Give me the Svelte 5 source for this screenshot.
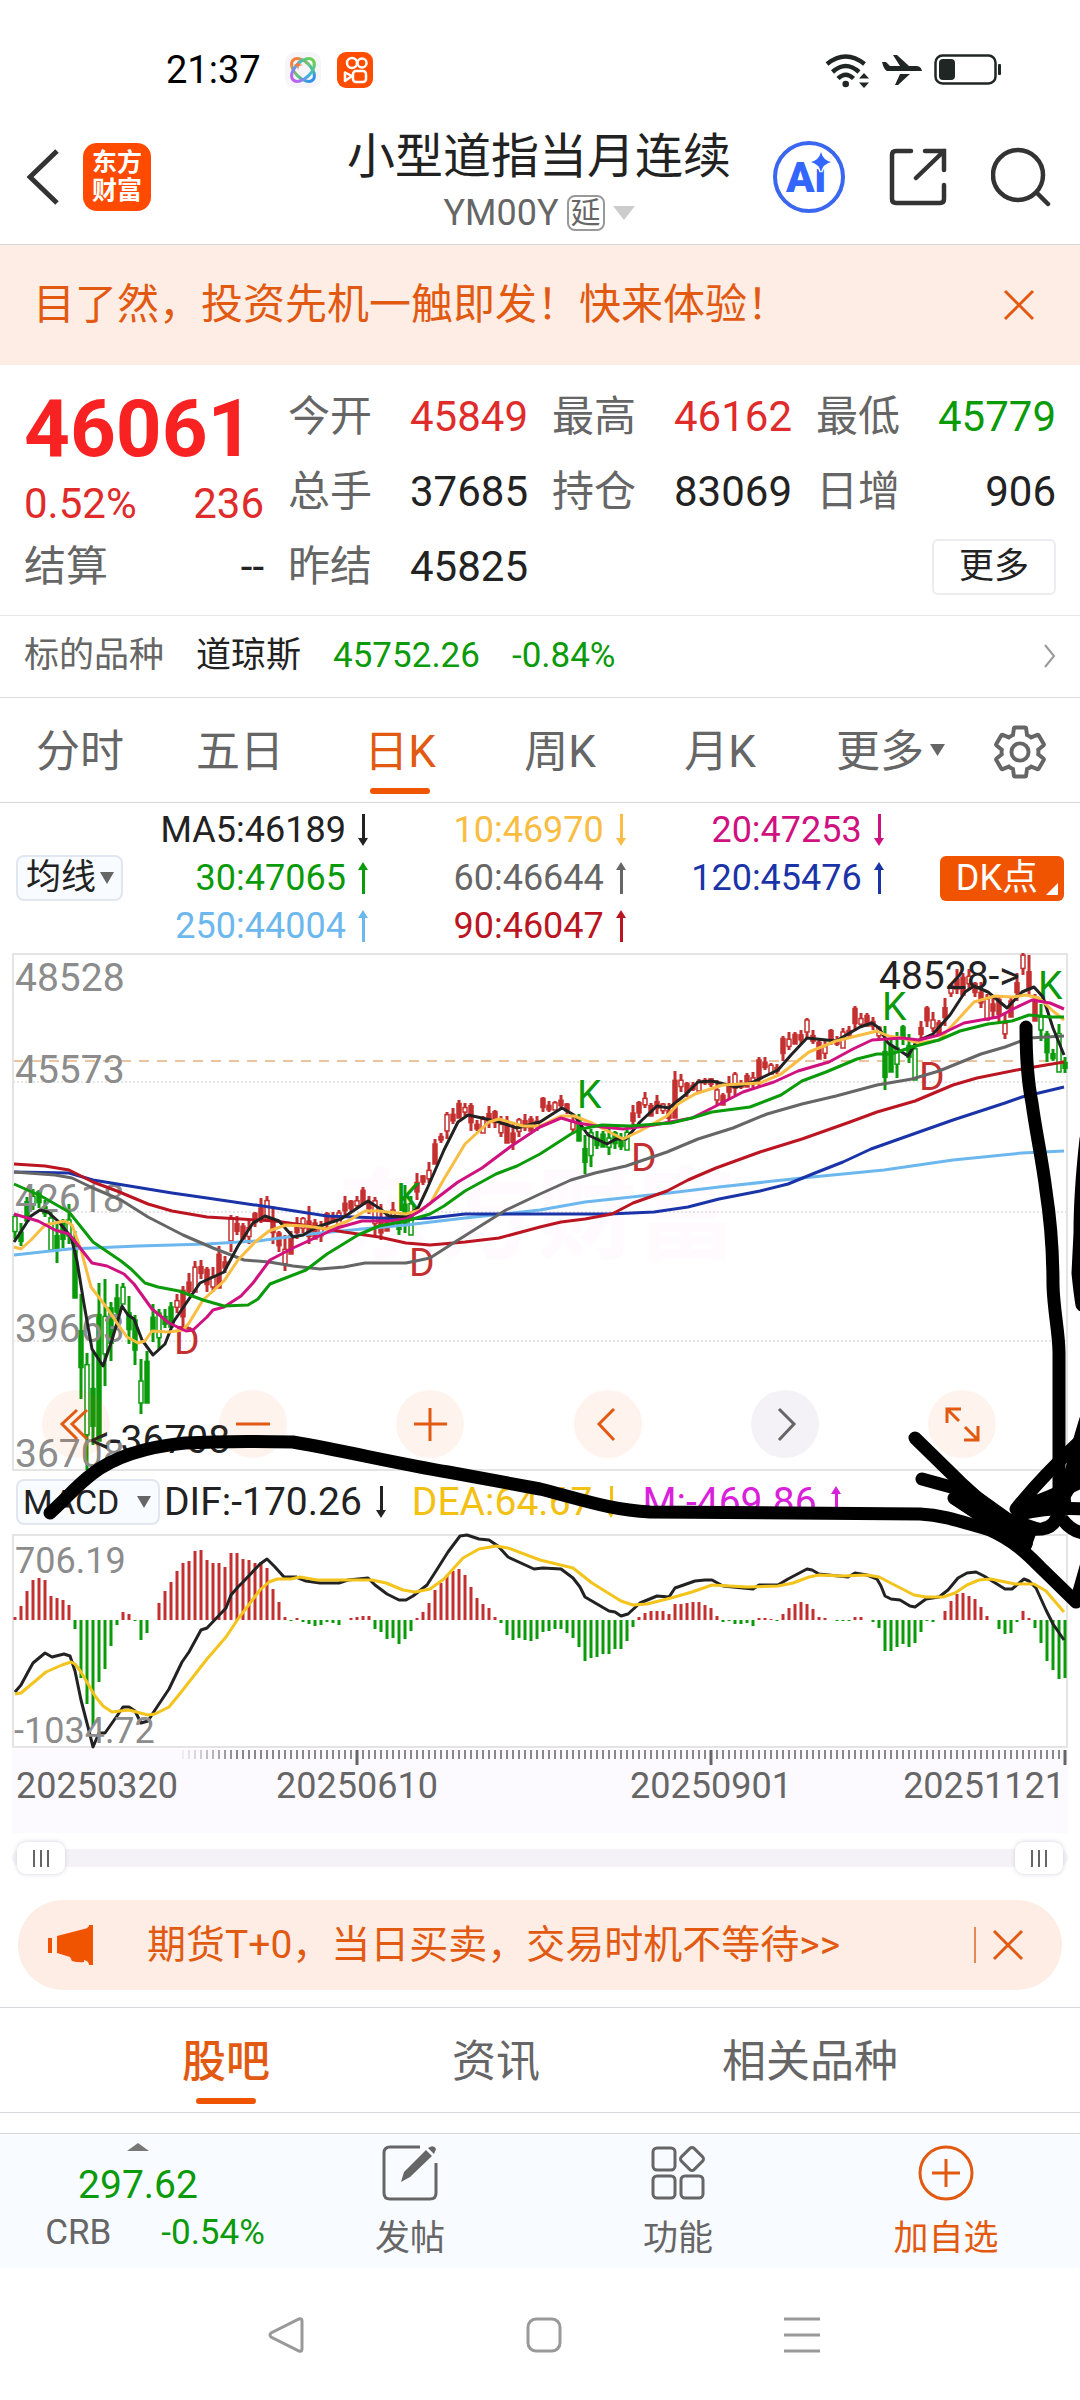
<script>
	const quotes = [
		{ label: '今开', value: '45849', tone: 'up' },
		{ label: '最高', value: '46162', tone: 'up' },
		{ label: '最低', value: '45779', tone: 'down' },
		{ label: '总手', value: '37685', tone: '' },
		{ label: '持仓', value: '83069', tone: '' },
		{ label: '日增', value: '906', tone: '' },
		{ label: '结算', value: '--', tone: '' },
		{ label: '昨结', value: '45825', tone: '' }
	];

	const periods = ['分时', '五日', '日K', '周K', '月K', '更多'];
	let period = $state('日K');

	const feeds = ['股吧', '资讯', '相关品种'];
	let feed = $state('股吧');

	let from = $state(0);
	let to = $state(100);

	const averages = [
		{ text: 'MA5:46189', color: '#222222', up: false },
		{ text: '10:46970', color: '#f8bd42', up: false },
		{ text: '20:47253', color: '#cf1280', up: false },
		{ text: '30:47065', color: '#0a9a0a', up: true },
		{ text: '60:46644', color: '#666666', up: true },
		{ text: '120:45476', color: '#1a34a8', up: true },
		{ text: '250:44004', color: '#6cb8ee', up: true },
		{ text: '90:46047', color: '#bb1522', up: true }
	];

	const macdValues = [
		{ text: 'DIF:-170.26', color: '#222222', up: false },
		{ text: 'DEA:64.67', color: '#f3c014', up: false },
		{ text: 'M:-469.86', color: '#d921dc', up: true }
	];

	// distance between two trading days and the x of the first one
	const step = 6;
	const firstX = 15;

	// high and low of every day
	const days = [
		[261,286],[270,293],[244,268],[236,257],[237,255],[247,264],[257,297],[268,310],[266,295],[251,291],
		[278,345],[341,446],[400,517],[398,492],[330,488],[326,433],[349,408],[331,366],[330,351],[343,391],
		[362,412],[406,461],[398,450],[351,389],[356,397],[356,375],[349,374],[341,360],[333,377],[320,343],
		[308,339],[307,326],[314,339],[314,339],[293,335],[303,320],[262,299],[263,282],[270,286],[266,291],
		[259,274],[245,270],[243,266],[253,291],[278,299],[282,318],[278,301],[264,286],[264,280],[253,291],
		[266,286],[268,289],[259,276],[259,270],[257,272],[243,264],[247,259],[243,255],[234,251],[243,261],
		[244,282],[251,287],[261,278],[249,272],[263,282],[232,280],[243,282],[220,247],[222,232],[209,230],
		[186,211],[180,190],[159,186],[155,171],[147,165],[150,163],[150,178],[167,178],[163,180],[153,175],
		[157,175],[163,184],[163,190],[171,197],[165,184],[161,178],[163,178],[163,178],[144,159],[148,159],
		[148,157],[142,157],[150,161],[161,180],[161,188],[182,221],[176,214],[178,196],[178,194],[176,202],
		[178,196],[180,197],[175,197],[152,175],[148,165],[139,155],[150,163],[142,161],[150,161],[150,169],
		[118,165],[121,139],[129,144],[129,138],[126,138],[125,132],[125,134],[127,152],[140,152],[123,146],
		[119,142],[127,136],[120,134],[119,136],[104,134],[104,117],[110,121],[111,121],[83,108],[79,97],
		[79,91],[77,91],[65,85],[77,91],[85,106],[87,106],[76,92],[83,93],[75,95],[73,86],
		[53,78],[60,74],[60,73],[64,77],[73,87],[73,137],[86,119],[79,125],[72,92],[81,110],
		[88,127],[68,87],[53,74],[59,79],[67,81],[45,73],[31,44],[16,41],[20,42],[16,37],
		[29,44],[29,55],[41,67],[44,64],[44,69],[60,86],[44,64],[20,48],[0,22],[2,44],
		[41,68],[51,88],[78,109],[96,108],[71,119],[104,120]
	];
	// day ranges drawn green, between a K signal and the next D signal
	const falling = [[0, 26], [64, 66], [94, 102], [145, 150], [171, 175]];
	const insets = [[0.1, 0.3], [0.35, 0.3], [0.2, 0], [0.4, 0.2]];

	const candles = days.map(([high, low], i) => {
		const [a, b] = insets[(i * 7) % 4];
		const size = low - high;
		return {
			x: firstX + step * i,
			high,
			low,
			top: high + size * a,
			body: size * (1 - a - b),
			hollow: i % 3 === 0,
			color: falling.some(([s, e]) => i >= s && i <= e) ? '#0a9a0a' : '#c43030'
		};
	});

	const priceLines = [
		{ color: '#6cb8ee', points: '14,302 69,296 138,293 207,291 258,288 310,281 362,276 406,272 465,265 540,257 585,249 669,240 719,234 802,225 884,217 953,207 1022,200 1064,198' },
		{ color: '#1a34a8', points: '14,219 69,220 93,227 172,240 207,245 241,250 269,254 327,263 406,266 430,265 465,261 540,261 609,261 654,259 688,254 719,246 760,238 788,231 815,220 843,209 871,196 919,179 953,167 1005,150 1022,144 1064,134' },
		{ color: '#bb1522', points: '14,211 45,213 69,217 93,229 117,238 148,251 172,258 207,264 241,266 275,268 310,273 344,279 379,284 406,290 430,292 465,289 499,285 540,274 561,269 585,266 612,261 633,250 667,238 688,227 716,215 760,199 802,186 850,169 877,159 915,148 953,132 977,125 1022,116 1064,109' },
		{ color: '#666666', points: '14,219 55,222 72,225 93,235 121,247 148,264 183,282 213,295 244,307 269,309 293,313 320,316 344,314 365,310 406,310 430,305 455,289 482,272 506,257 540,241 571,227 595,220 626,213 667,199 698,186 733,175 767,161 802,151 836,143 877,132 912,126 939,118 981,101 1005,94 1029,85 1064,83' },
		{ color: '#222222', points: '14,289 22,277 31,263 40,257 48,259 59,269 71,284 77,308 84,351 92,396 103,413 112,387 122,353 128,362 134,366 142,387 153,402 165,391 174,368 189,346 200,330 224,319 238,293 253,270 265,263 279,268 293,284 303,282 317,274 341,266 368,248 379,255 389,263 406,264 418,255 427,236 444,197 458,169 468,162 482,165 499,169 517,175 540,169 554,160 562,155 574,162 588,182 607,191 616,186 626,186 640,169 657,153 669,155 685,142 698,129 712,128 736,134 753,129 778,117 791,102 807,85 836,88 860,74 872,70 879,75 888,90 908,103 917,88 933,81 950,62 965,39 974,33 988,39 1007,55 1022,39 1034,34 1043,44 1053,75 1064,102' },
		{ color: '#f8bd42', points: '14,294 21,296 31,287 45,272 65,268 72,272 81,297 91,334 107,355 117,370 127,384 138,390 145,388 152,378 169,379 183,377 189,370 203,347 224,328 238,307 255,289 269,278 286,272 306,273 327,276 348,268 365,258 379,258 406,261 420,257 430,251 444,226 465,191 489,169 499,166 523,173 540,173 561,163 574,163 592,170 623,186 640,178 667,163 678,151 695,141 723,132 760,130 781,121 809,99 836,88 877,78 888,83 902,85 919,90 939,87 950,75 974,49 995,43 1012,44 1026,42 1039,45 1053,58 1064,67' },
		{ color: '#cf1280', points: '14,261 38,268 55,277 69,281 81,296 92,310 107,313 124,321 134,331 152,356 169,370 186,378 193,377 207,364 213,357 224,354 241,343 253,330 270,307 293,295 317,284 337,275 362,268 389,268 406,266 420,258 437,245 458,229 482,215 510,194 540,174 561,165 578,170 602,174 623,176 654,172 692,165 712,155 743,139 774,129 798,118 829,109 853,96 872,87 902,85 919,87 939,82 964,70 998,64 1015,55 1032,47 1050,50 1064,56' },
		{ color: '#0a9a0a', points: '14,231 41,243 69,259 93,289 121,308 131,316 145,330 158,334 179,338 203,347 224,353 248,352 258,346 270,331 306,317 327,301 358,282 379,273 406,268 430,261 444,253 465,238 496,221 517,213 540,201 554,192 571,181 581,176 602,172 630,173 671,170 692,165 712,159 750,154 781,142 802,128 826,119 857,106 877,101 891,101 912,94 939,87 960,78 988,71 1012,68 1029,62 1050,64 1064,64' }
	];

	const priceScale = [
		{ text: '48528', y: 38 },
		{ text: '45573', y: 130 },
		{ text: '42618', y: 259 },
		{ text: '39663', y: 389 },
		{ text: '36708', y: 514 }
	];

	const signals = [
		{ kind: 'D', x: 174, y: 401 },
		{ kind: 'K', x: 396, y: 258 },
		{ kind: 'D', x: 409, y: 323 },
		{ kind: 'K', x: 577, y: 155 },
		{ kind: 'D', x: 631, y: 218 },
		{ kind: 'K', x: 882, y: 67 },
		{ kind: 'D', x: 919, y: 137 },
		{ kind: 'K', x: 1038, y: 46 }
	];

	const zero = 86;
	const histogram = [
		3, 14, 29, 40, 42, 40, 24, 22, 20, 15, -9, -58, -84, -106, -62, -49, -26, -5, 8, 6,
		-1, -20, -13, 0, 17, 29, 38, 49, 57, 59, 69, 70, 60, 57, 57, 53, 67, 67, 61, 60,
		57, 58, 52, 31, 18, 3, -1, 2, -2, -4, -6, -5, -2, -3, -5, 0, 2, 3, 4, 4,
		-9, -12, -19, -18, -24, -19, -11, 2, 8, 17, 30, 37, 45, 49, 51, 45, 33, 22, 16, 12,
		3, -3, -15, -20, -18, -20, -21, -19, -12, -11, -9, -9, -13, -18, -27, -41, -38, -37, -34, -34,
		-29, -29, -21, -7, 3, 7, 9, 9, 9, 6, 16, 16, 17, 18, 18, 15, 12, 4, -2, -1,
		-4, -4, -3, -6, 2, 2, 1, -1, 6, 12, 16, 18, 16, 11, 3, 2, 0, -1, -1, -1,
		3, 3, 0, -2, -8, -31, -31, -27, -24, -27, -23, -12, -1, -2, 0, 9, 19, 26, 27, 24,
		21, 13, 4, 0, -9, -14, -13, -2, 9, 2, -8, -23, -41, -50, -59, -58
	];
	const dif = '15,158 21,151 28,138 33,129 45,119 52,123 64,120 70,122 75,137 81,166 88,193 93,213 99,199 105,199 117,182 123,173 129,173 135,177 141,189 148,187 153,179 169,155 182,128 189,118 201,96 207,94 226,74 231,61 238,53 243,48 260,30 267,25 275,33 284,43 296,43 306,47 320,49 339,49 348,46 368,44 375,51 387,60 399,66 406,66 413,62 427,51 436,37 448,18 460,2 467,1 479,5 489,6 498,12 508,23 534,35 543,34 561,35 573,44 580,53 585,63 609,77 615,78 621,82 628,80 640,69 657,62 669,63 675,54 695,47 705,46 712,46 723,52 743,54 753,55 759,51 778,51 788,45 807,35 812,36 819,40 848,43 855,39 867,41 877,45 881,52 885,62 891,65 900,66 910,72 915,73 926,65 939,63 948,56 958,44 967,39 976,38 984,42 1005,55 1012,55 1024,45 1029,47 1036,54 1046,76 1053,90 1064,106';
	const dea = '15,160 21,159 46,138 62,131 71,128 75,130 81,138 95,162 103,172 112,178 129,176 148,181 155,180 169,173 182,157 207,125 226,103 238,85 260,56 269,48 277,45 291,45 300,43 317,46 344,46 372,46 386,49 403,56 415,58 430,55 444,45 463,24 479,15 496,12 508,14 540,26 573,34 592,49 621,67 633,71 647,70 671,64 692,58 712,51 747,53 778,52 793,49 809,43 819,41 843,42 867,41 879,43 914,61 926,63 943,63 955,59 967,51 979,46 991,45 1015,50 1034,50 1046,57 1064,78';

	const ticks = Array.from({ length: 148 }, (_, i) => 183 + step * i);
	const majorTicks = [357, 711, 1065];
</script>

{#snippet trend(up)}
	<svg class="trend" viewBox="0 0 10 32" aria-hidden="true">
		{#if up}
			<path d="M5 0 10 8H7V32H4V8H0Z" fill="currentColor" />
		{:else}
			<path d="M5 32 10 24H7V0H4V24H0Z" fill="currentColor" />
		{/if}
	</svg>
{/snippet}

{#snippet cross()}
	<svg class="cross" viewBox="0 0 32 32" aria-hidden="true">
		<path d="M2 2 30 30M30 2 2 30" fill="none" stroke="currentColor" stroke-width="3" />
	</svg>
{/snippet}

<div class="page">
	<div class="status">
		<div class="status-side">
			<span class="clock">21:37</span>
			<svg width="36" height="36" viewBox="0 0 36 36" aria-hidden="true">
				<defs>
					<linearGradient id="warm" x1="0" y1="0" x2="1" y2="0">
						<stop offset="0" stop-color="#ff7a3c" />
						<stop offset=".5" stop-color="#5fc97a" />
						<stop offset="1" stop-color="#2f8df5" />
					</linearGradient>
					<linearGradient id="cool" x1="1" y1="0" x2="0" y2="0">
						<stop offset="0" stop-color="#6fd04c" />
						<stop offset=".5" stop-color="#35b6e8" />
						<stop offset="1" stop-color="#c55cf0" />
					</linearGradient>
				</defs>
				<rect width="36" height="36" rx="10" fill="#f6f5fa" />
				<ellipse cx="18" cy="18" rx="14" ry="8" transform="rotate(45 18 18)" fill="none" stroke="url(#warm)" stroke-width="3" />
				<ellipse cx="18" cy="18" rx="14" ry="8" transform="rotate(-45 18 18)" fill="none" stroke="url(#cool)" stroke-width="3" />
				<path d="M13 8 14 12 18 13 14 14 13 18 12 14 8 13 12 12Z" fill="#ff7a3c" />
			</svg>
			<svg width="36" height="36" viewBox="0 0 36 36" aria-hidden="true">
				<rect width="36" height="36" rx="9" fill="#ff4d00" />
				<g fill="none" stroke="#fff" stroke-width="2.5">
					<circle cx="15" cy="11" r="5" />
					<circle cx="25" cy="11" r="4.5" />
					<rect x="16" y="19" width="13" height="11" rx="3" />
					<path d="M15 24 8 20.500V29Z" stroke-linejoin="round" />
				</g>
			</svg>
		</div>
		<div class="status-side">
			<svg width="45" height="35" viewBox="0 0 45 35" aria-hidden="true">
				<g fill="none" stroke="#202624" stroke-width="4.500">
					<path d="M2 11Q20.700-4 39.500 11" />
					<path d="M7.500 19Q20.700 7 34 19" />
					<path d="M13 25.500Q20.700 18 28.500 25.500" />
				</g>
				<circle cx="20.700" cy="31" r="3.300" fill="#202624" />
				<path d="M39 20 44 25.500H34ZM39 35 44 29.500H34Z" fill="#202624" />
			</svg>
			<svg width="40" height="32" viewBox="0 0 40 32" aria-hidden="true">
				<path d="M0 8H4L8 12H18L11 1H15L27 12H34Q39 12 40 17H5Q2 16 0 8ZM18 20H28L16 31H13Z" fill="#202624" />
			</svg>
			<svg class="battery" width="68" height="32" viewBox="0 0 68 32" aria-hidden="true">
				<rect x="1.500" y="1.500" width="60" height="28" rx="7" fill="none" stroke="#202624" stroke-width="2.500" />
				<rect x="5" y="5" width="16" height="21" rx="4" fill="#202624" />
				<rect x="64" y="10" width="3" height="11" rx="1" fill="#202624" />
			</svg>
		</div>
	</div>

	<header>
		<div class="side">
			<button aria-label="返回">
				<svg width="32" height="56" viewBox="0 0 32 56"><path d="M30 2 3 28 30 54" fill="none" stroke="#333" stroke-width="5" /></svg>
			</button>
			<a class="logo" href="#home">东方<br />财富</a>
		</div>
		<div class="title">
			<h1>小型道指当月连续</h1>
			<button class="code">YM00Y<span class="delay">延</span>
				<svg width="22" height="14" viewBox="0 0 22 14" aria-hidden="true"><path d="M0 0H22L11 14Z" fill="#ccc" /></svg>
			</button>
		</div>
		<div class="side actions">
			<button aria-label="Ai">
				<svg width="72" height="72" viewBox="0 0 72 72">
					<circle cx="36" cy="36" r="34" fill="none" stroke="#3a66f0" stroke-width="4" />
					<text class="ai" x="13" y="51">Ai</text>
					<path d="M48 11Q50 19 58 21Q50 23 48 31Q46 23 38 21Q46 19 48 11Z" fill="#3266ff" stroke="#fff" stroke-width="3" paint-order="stroke" />
				</svg>
			</button>
			<button aria-label="分享">
				<svg width="58" height="58" viewBox="0 0 58 58">
					<path d="M22 3H7Q3 3 3 7V51Q3 55 7 55H51Q55 55 55 51V37M36 3H55V22M55 3 27 30" fill="none" stroke="#333" stroke-width="4.500" stroke-linecap="round" />
				</svg>
			</button>
			<button aria-label="搜索">
				<svg width="60" height="60" viewBox="0 0 60 60">
					<path d="M46 46 57 57" stroke="#333" stroke-width="4.500" stroke-linecap="round" />
					<circle cx="27" cy="28" r="25" fill="none" stroke="#333" stroke-width="4.500" />
				</svg>
			</button>
		</div>
	</header>

	<div class="banner">
		<a href="#trial">目了然，投资先机一触即发！快来体验！</a>
		<button aria-label="关闭">{@render cross()}</button>
	</div>

	<section class="quote">
		<div class="last">
			<strong>46061</strong>
			<div class="change"><span>0.52%</span><span>236</span></div>
		</div>
		{#each quotes as q}
			<div class="cell"><span class="label">{q.label}</span><span class={q.tone}>{q.value}</span></div>
		{/each}
		<button class="more">更多</button>
	</section>

	<a class="underlying" href="#underlying">
		<span class="label">标的品种</span>
		<span>道琼斯</span>
		<span class="down">45752.26</span>
		<span class="down">-0.84%</span>
		<svg width="12" height="24" viewBox="0 0 12 24" aria-hidden="true"><path d="M1 1 10 12 1 23" fill="none" stroke="#999" stroke-width="2" /></svg>
	</a>

	<nav class="periods">
		{#each periods as p}
			<button class:active={p === period} onclick={() => (period = p)}>
				{p}{#if p === '更多'}<svg class="caret" width="15" height="12" viewBox="0 0 15 12" aria-hidden="true"><path d="M0 0H15L7.500 12Z" fill="#666" /></svg>{/if}
			</button>
		{/each}
		<button aria-label="设置">
			<svg width="54" height="54" viewBox="1 1 22 22" fill="none" stroke="#666" stroke-width="1.600">
				<path d="M19.430 12.980c.04-.32.07-.64.07-.98s-.03-.66-.07-.98l2.110-1.650c.19-.15.24-.42.12-.64l-2-3.460c-.12-.22-.39-.3-.61-.22l-2.490 1c-.52-.4-1.080-.73-1.690-.98l-.38-2.650C14.460 2.180 14.250 2 14 2h-4c-.25 0-.46.18-.49.42l-.38 2.650c-.61.25-1.170.59-1.690.98l-2.490-1c-.23-.09-.49 0-.61.22l-2 3.460c-.13.22-.07.49.12.64l2.110 1.650c-.04.32-.07.65-.07.98s.03.66.07.98l-2.110 1.650c-.19.15-.24.42-.12.64l2 3.460c.12.22.39.3.61.22l2.490-1c.52.4 1.080.73 1.690.98l.38 2.650c.03.24.24.42.49.42h4c.25 0 .46-.18.49-.42l.38-2.650c.61-.25 1.170-.59 1.690-.98l2.490 1c.23.09.49 0 .61-.22l2-3.460c.12-.22.07-.49-.12-.64l-2.110-1.650z" />
				<circle cx="12" cy="12" r="3.500" />
			</svg>
		</button>
	</nav>

	<section class="charts">
		<div class="averages">
			<label class="pick">
				<select aria-label="主图指标"><option>均线</option><option>BOLL</option></select>
				<svg width="14" height="12" viewBox="0 0 14 12" aria-hidden="true"><path d="M0 0H14L7 12Z" fill="#666" /></svg>
			</label>
			<div class="values">
				{#each averages as a}
					<span class="value" style="color: {a.color}">{a.text}{@render trend(a.up)}</span>
				{/each}
			</div>
			<button class="dk">DK点
				<svg width="12" height="12" viewBox="0 0 12 12" aria-hidden="true"><path d="M12 0V12H0Z" fill="#fff" /></svg>
			</button>
		</div>

		<div class="price">
			<svg class="plot" viewBox="0 0 1080 518" role="img" aria-label="日K线图">
				<text class="watermark" x="337" y="298">东方财富</text>
				<path d="M13 129H1067M13 259H1067M13 388H1067" stroke="#ccc" stroke-dasharray="2 2" />
				<path d="M13 108H1067" stroke="#e6b080" stroke-width="1.500" stroke-dasharray="10 8" />
				<path d="M13 1H1067V517H13Z" fill="none" stroke="#e4e4e4" stroke-width="2" />
				{#each candles as c}
					<path d="M{c.x} {c.high}V{c.low}" stroke={c.color} stroke-width="3" />
					<rect x={c.x - 2} y={c.top} width="4" height={c.body} fill={c.hollow ? '#fff' : c.color} stroke={c.color} stroke-width="1.500" />
				{/each}
				{#each priceScale as s}
					<text class="scale" x="15" y={s.y}>{s.text}</text>
				{/each}
				{#each signals as s}
					<text class="signal" x={s.x} y={s.y} fill={s.kind === 'K' ? '#0a9a0a' : '#c43030'}>{s.kind}</text>
				{/each}
				{#each priceLines as line}
					<polyline points={line.points} fill="none" stroke={line.color} stroke-width="3" stroke-linejoin="round" />
				{/each}
				<text class="signal" x="879" y="36" fill="#222">48528-&gt;</text>
				<text class="signal" x="90" y="500" fill="#222">&lt;-36708</text>
			</svg>
			<div class="tools">
				<button aria-label="最早">
					<svg viewBox="0 0 68 68"><path d="M35 20 20 34 35 49M45 20 30 34 45 49" /></svg>
				</button>
				<button aria-label="缩小">
					<svg viewBox="0 0 68 68"><path d="M17 34H51" /></svg>
				</button>
				<button aria-label="放大">
					<svg viewBox="0 0 68 68"><path d="M18 34H51M34 18V51" /></svg>
				</button>
				<button aria-label="向前">
					<svg viewBox="0 0 68 68"><path d="M40 19 25 34 40 50" /></svg>
				</button>
				<button class="muted" aria-label="向后">
					<svg viewBox="0 0 68 68"><path d="M28 19 43 34 28 50" /></svg>
				</button>
				<button aria-label="全屏">
					<svg viewBox="0 0 68 68"><path d="M33 19H19V33M19 19 31 31M50 36V50H36M50 50 37 37" /></svg>
				</button>
			</div>
		</div>

		<div class="macd">
			<label class="pick wide">
				<select aria-label="副图指标"><option>MACD</option><option>KDJ</option></select>
				<svg width="14" height="12" viewBox="0 0 14 12" aria-hidden="true"><path d="M0 0H14L7 12Z" fill="#666" /></svg>
			</label>
			{#each macdValues as m}
				<span class="value" style="color: {m.color}">{m.text}{@render trend(m.up)}</span>
			{/each}
		</div>

		<svg class="plot" viewBox="0 0 1080 214" role="img" aria-label="MACD">
			<path d="M13 1H1067V213H13Z" fill="none" stroke="#e4e4e4" stroke-width="2" />
			{#each histogram as h, i}
				<path d="M{firstX + step * i} {zero}v{-h}" stroke={h > 0 ? '#c43030' : '#0a9a0a'} stroke-width="3" />
			{/each}
			<polyline points={dif} fill="none" stroke="#222" stroke-width="3" stroke-linejoin="round" />
			<polyline points={dea} fill="none" stroke="#f3c41c" stroke-width="3" stroke-linejoin="round" />
			<text class="small-scale" x="15" y="39">706.19</text>
			<text class="small-scale" x="14" y="209">-1034.72</text>
		</svg>

		<svg class="plot" viewBox="0 0 1080 85" role="img" aria-label="日期">
			<rect x="12" y="1" width="1056" height="84" fill="#fdfaff" />
			{#each ticks as x, i}
				<path d="M{x} 2V11" stroke="#888" stroke-width="2" opacity={Math.min(1, 0.1 + i / 10)} />
			{/each}
			{#each majorTicks as x}
				<path d="M{x} 2V17" stroke="#666" stroke-width="3" />
			{/each}
			<text class="date" x="16" y="50">20250320</text>
			<text class="date" x="357" y="50" text-anchor="middle">20250610</text>
			<text class="date" x="711" y="50" text-anchor="middle">20250901</text>
			<text class="date" x="1065" y="50" text-anchor="end">20251121</text>
		</svg>

		<!-- pen marks on top of both charts -->
		<svg class="ink" viewBox="0 0 1080 820" aria-hidden="true">
			<g fill="none" stroke="#000" stroke-width="13" stroke-linecap="round" stroke-linejoin="round">
				<path d="M50 710C65 697 75 684 92 671C115 653 145 644 185 640C220 638 255 638 293 639C345 648 395 660 448 669L540 686C580 696 610 707 650 709L920 711C945 712 965 720 990 727C1015 738 1030 754 1040 764L1076 799L1090 750" />
				<path d="M1026 224C1026 260 1028 280 1032 300C1036 330 1042 355 1046 388C1051 420 1053 450 1053 483C1054 510 1059 530 1059 550V710" />
				<path d="M915 635 960 679 993 709C1010 724 1020 727 1042 726Q1056 724 1059 708V700" />
				<path d="M922 676 962 687 1000 716 1026 741" />
				<path d="M954 695 990 719 1020 743 1026 741" />
				<path d="M1078 640Q1040 676 1016 706Q1050 695 1082 678" />
				<path d="M1020 711Q1050 704 1084 706M1062 716Q1072 729 1084 730" />
				<path d="M1088 610Q1078 640 1066 690L1084 660" />
				<path d="M1086 336Q1080 390 1080 430L1078 470Q1080 490 1082 502" />
			</g>
			<path d="M968 680 1010 710 1040 720 1030 748 1000 732 950 700Z" />
			<path d="M1020 702 1070 690 1072 705 1024 714Z" />
		</svg>
	</section>

	<div class="range">
		<input type="range" min="0" max="100" bind:value={from} aria-label="开始日期" />
		<input type="range" min="0" max="100" bind:value={to} aria-label="结束日期" />
	</div>

	<div class="promo">
		<svg width="46" height="40" viewBox="0 0 46 40" aria-hidden="true">
			<path d="M0 13H4V28H0ZM9 11 36 4Q41 3 41 0H45V40H41Q41 36 36 35V37Q31 38 24 36L22 32 9 28Z" fill="#f05400" />
		</svg>
		<a href="#futures">期货T+0，当日买卖，交易时机不等待&gt;&gt;</a>
		<button aria-label="关闭">{@render cross()}</button>
	</div>

	<nav class="feeds">
		{#each feeds as f}
			<button class:active={f === feed} onclick={() => (feed = f)}>{f}</button>
		{/each}
	</nav>

	<footer>
		<button class="index">
			<svg width="22" height="8" viewBox="0 0 22 8" aria-hidden="true"><path d="M11 0 22 8H0Z" fill="#777" /></svg>
			<span class="index-value down">297.62</span>
			<span class="index-row"><span>CRB</span><span class="down">-0.54%</span></span>
		</button>
		<button>
			<svg width="56" height="56" viewBox="0 0 56 56" fill="none" stroke="#666" stroke-width="3">
				<path d="M38 2H8Q2 2 2 8V48Q2 54 8 54H48Q54 54 54 48V18" />
				<path d="M19 37 22 27 44 5 50 11 28 32ZM46 3Q52-1 54 4L52 9Z" fill="#666" stroke="none" />
			</svg>
			发帖
		</button>
		<button>
			<svg width="54" height="56" viewBox="0 0 54 56" fill="none" stroke="#666" stroke-width="3">
				<rect x="2" y="3" width="22" height="22" rx="4" />
				<rect x="2" y="31" width="22" height="22" rx="4" />
				<rect x="30" y="31" width="22" height="22" rx="4" />
				<rect x="32" y="5" width="18" height="18" rx="3" transform="rotate(45 41 14)" />
			</svg>
			功能
		</button>
		<button class="add">
			<svg width="56" height="56" viewBox="0 0 56 56" fill="none" stroke="#e25a12" stroke-width="3">
				<circle cx="28" cy="28" r="26" />
				<path d="M14 28H42M28 14V42" />
			</svg>
			加自选
		</button>
	</footer>

	<div class="system">
		<button aria-label="返回">
			<svg width="36" height="36" viewBox="0 0 36 36"><path d="M31 2Q34 1 34 4V32Q34 35 31 34L3 20Q1 18 3 16Z" /></svg>
		</button>
		<button aria-label="主屏幕">
			<svg width="36" height="36" viewBox="0 0 36 36"><rect x="2" y="2" width="32" height="32" rx="8" /></svg>
		</button>
		<button aria-label="最近任务">
			<svg width="36" height="36" viewBox="0 0 36 36"><path d="M0 2H36M0 18H36M0 34H36" /></svg>
		</button>
	</div>
</div>

<style>
	:global(body) {
		margin: 0;
		background: #fff;
	}
	.page {
		background: #fff;
		color: #222;
		font-family: Roboto, "Noto Sans CJK SC", sans-serif;
		font-size: 36px;
		line-height: 48px;
	}
	.page *, .page *::before, .page *::after {
		box-sizing: border-box;
	}
	svg {
		flex: none;
	}
	button {
		display: flex;
		align-items: center;
		justify-content: center;
		margin: 0;
		padding: 0;
		border: 0;
		background: none;
		color: inherit;
		font: inherit;
		cursor: pointer;
	}
	a {
		color: inherit;
		text-decoration: none;
	}
	.up {
		color: #e02b2b;
	}
	.down {
		color: #0a9a0a;
	}
	.label {
		color: #666;
	}
	.cross {
		width: 32px;
		height: 32px;
	}

	.status {
		display: flex;
		justify-content: space-between;
		padding: 51px 78px 17px 166px;
		line-height: 38px;
	}
	.status-side {
		display: flex;
		align-items: center;
		gap: 12px;
	}
	.status-side:first-child {
		gap: 16px;
	}
	.clock {
		margin-right: 8px;
		color: #000;
		font-size: 38px;
	}

	header {
		display: grid;
		grid-template-columns: 1fr auto 1fr;
		align-items: center;
		padding: 15px 29px 11px 27px;
		border-bottom: 1px solid #d4d8d4;
	}
	.side {
		display: flex;
		align-items: center;
		gap: 24px;
	}
	.actions {
		justify-content: flex-end;
		gap: 44px;
	}
	.logo {
		width: 68px;
		padding: 6px 0;
		border-radius: 14px;
		background: #ff4a00;
		color: #fff;
		font-size: 25px;
		font-weight: 700;
		line-height: 28px;
		text-align: center;
	}
	.title {
		display: flex;
		flex-direction: column;
		align-items: center;
		gap: 8px;
		padding-top: 8px;
	}
	h1 {
		margin: 0;
		font-size: 48px;
		font-weight: 400;
		line-height: 56px;
	}
	.code {
		gap: 8px;
		color: #666;
		line-height: 40px;
	}
	.delay {
		padding: 0 2px;
		border: 2px solid #999;
		border-radius: 8px;
		font-size: 30px;
		line-height: 32px;
	}
	.ai {
		fill: #3266ff;
		font-size: 42px;
		font-weight: 900;
	}

	.banner {
		display: flex;
		align-items: center;
		justify-content: space-between;
		padding: 32px 45px 32px 33px;
		background: #feede5;
		color: #e25a12;
		font-size: 42px;
		line-height: 56px;
	}

	.quote {
		display: grid;
		grid-template-columns: repeat(4, 1fr);
		column-gap: 24px;
		padding: 14px 24px 11px;
		border-bottom: 1px solid #e8e8e8;
		font-size: 42px;
		line-height: 75px;
	}
	.last {
		grid-row: span 2;
		color: #e02b2b;
		line-height: 50px;
	}
	.last strong {
		display: block;
		color: #f82222;
		font-size: 80px;
		line-height: 100px;
	}
	.change, .cell {
		display: flex;
		justify-content: space-between;
	}
	.more {
		grid-column: 4;
		align-self: center;
		justify-self: end;
		padding: 2px 25px;
		border: 2px solid #ececf0;
		border-radius: 6px;
		font-size: 35px;
		line-height: 48px;
	}

	.underlying {
		display: flex;
		align-items: center;
		gap: 32px;
		padding: 16px 24px 17px;
		border-bottom: 1px solid #ddd;
		font-size: 35px;
	}
	.underlying svg {
		margin-left: auto;
	}

	.periods {
		display: grid;
		grid-template-columns: repeat(6, 4fr) 3fr;
		border-bottom: 1px solid #d8d8dc;
		color: #666;
		font-size: 44px;
		line-height: 100px;
	}
	.periods button {
		position: relative;
		padding-top: 4px;
	}
	.caret {
		position: absolute;
		top: calc(50% - 6px);
		left: calc(50% + 50px);
	}
	.active {
		color: #e25a12;
	}
	.active::after {
		content: "";
		position: absolute;
		bottom: 8px;
		left: calc(50% - 30px);
		width: 60px;
		height: 6px;
		border-radius: 3px;
		background: #ef5500;
	}

	.charts {
		position: relative;
	}
	.averages {
		display: flex;
		align-items: center;
		padding: 3px 16px;
	}
	.values {
		flex: 1;
		display: grid;
		grid-template-columns: 244fr 257fr 257fr;
		margin-right: 56px;
	}
	.value {
		display: flex;
		align-items: center;
		justify-content: flex-end;
		gap: 12px;
	}
	.trend {
		width: 10px;
		height: 32px;
	}
	.pick {
		position: relative;
		display: flex;
	}
	.pick select {
		appearance: none;
		width: 107px;
		height: 46px;
		margin: 0;
		padding: 0 8px;
		border: 2px solid #e2e6f0;
		border-radius: 8px;
		background: #f8fbff;
		color: #222;
		font: inherit;
		font-size: 35px;
		line-height: 42px;
	}
	.pick svg {
		position: absolute;
		top: 17px;
		right: 9px;
		pointer-events: none;
	}
	.wide {
		margin-right: -22px;
	}
	.wide select {
		width: 144px;
		padding: 0 5px;
		font-size: 34px;
	}
	.dk {
		gap: 8px;
		padding: 0 6px 0 16px;
		border-radius: 6px;
		background: #f05400;
		color: #fff;
		font-size: 36px;
		line-height: 45px;
	}
	.dk svg {
		align-self: flex-end;
		margin-bottom: 6px;
	}
	.plot {
		display: block;
		width: 100%;
		overflow: visible;
	}
	.price {
		position: relative;
	}
	.watermark {
		fill: #fffafe;
		font-size: 100px;
		font-weight: 700;
	}
	.scale {
		fill: #8c8c8c;
		font-size: 39px;
	}
	.small-scale {
		fill: #8c8c8c;
		font-size: 36px;
	}
	.signal {
		font-size: 39px;
	}
	.date {
		fill: #666;
		font-size: 36px;
	}
	.tools {
		position: absolute;
		right: 84px;
		bottom: 13px;
		left: 42px;
		display: flex;
		justify-content: space-between;
	}
	.tools button {
		width: 68px;
		height: 68px;
		border-radius: 50%;
		background: rgba(240, 84, 0, 0.07);
	}
	.tools .muted {
		background: rgba(80, 40, 120, 0.06);
	}
	.tools path {
		fill: none;
		stroke: #e25a12;
		stroke-width: 3;
	}
	.tools .muted path {
		stroke: #666;
	}
	.macd {
		display: flex;
		align-items: center;
		gap: 26px;
		padding: 7px 16px 8px;
		font-size: 39px;
	}
	.macd .value {
		gap: 14px;
	}
	.ink {
		position: absolute;
		top: 0;
		left: 0;
		width: 100%;
		pointer-events: none;
	}

	.range {
		position: relative;
		height: 50px;
		margin: 0 12px;
	}
	.range::before {
		content: "";
		position: absolute;
		top: 16px;
		right: 0;
		left: 0;
		height: 18px;
		border-radius: 9px;
		background: #f5f2f7;
	}
	.range input {
		appearance: none;
		position: absolute;
		top: 0;
		left: 5px;
		width: calc(100% - 10px);
		height: 50px;
		margin: 0;
		background: none;
		pointer-events: none;
	}
	.range input::-webkit-slider-thumb {
		appearance: none;
		width: 48px;
		height: 32px;
		border-radius: 9px;
		background: repeating-linear-gradient(90deg, #666 0 2px, #fff 2px 7px) center / 16px 17px no-repeat, #fff;
		box-shadow: 0 0 5px #d5cfdc;
		pointer-events: auto;
	}

	.promo {
		display: flex;
		align-items: center;
		margin: 17px 18px;
		padding: 17px 38px 17px 30px;
		border-radius: 45px;
		background: #feede5;
		color: #e25a12;
		font-size: 39px;
		line-height: 56px;
	}
	.promo a {
		flex: 1;
		margin-left: 53px;
	}
	.promo button {
		height: 36px;
		padding-left: 16px;
		border-left: 2px solid #e08a58;
	}

	.feeds {
		display: flex;
		justify-content: space-evenly;
		margin-bottom: 20px;
		border-top: 1px solid #d8d8dc;
		border-bottom: 1px solid #d8d8dc;
		color: #666;
		font-size: 44px;
		line-height: 99px;
	}
	.feeds button {
		position: relative;
		padding-top: 5px;
	}
	.feeds .active {
		font-weight: 500;
	}

	footer {
		display: grid;
		grid-template-columns: 276fr 268fr 268fr 268fr;
		border-top: 1px solid #d4d8dc;
		background: #f8fbff;
		color: #666;
	}
	footer button {
		flex-direction: column;
		gap: 14px;
		padding: 11px 0 5px;
		font-size: 35px;
	}
	footer .index {
		gap: 0;
		padding: 9px 0 11px;
	}
	.index svg {
		margin-bottom: 10px;
	}
	.index-value {
		font-size: 39px;
	}
	.index-row {
		display: flex;
		gap: 50px;
		margin-left: 34px;
	}
	.add {
		color: #e25a12;
	}

	.system {
		display: flex;
		justify-content: center;
		gap: 222px;
		padding: 49px 0 48px 8px;
	}
	.system path, .system rect {
		fill: none;
		stroke: #999;
		stroke-width: 3;
	}
</style>
